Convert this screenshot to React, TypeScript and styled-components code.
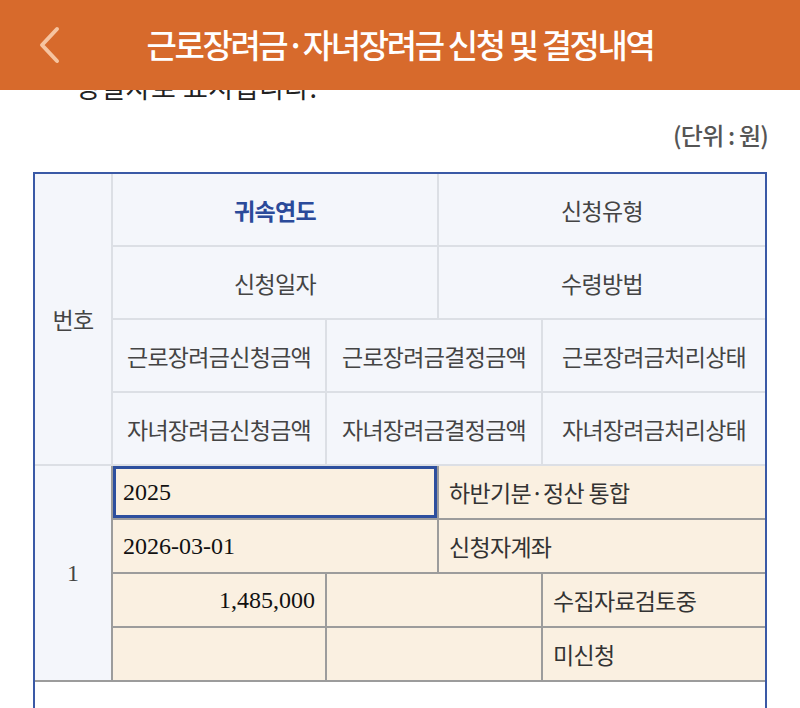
import React from 'react';
import styled, { createGlobalStyle } from 'styled-components';

const Global = createGlobalStyle`
  html, body {
    margin: 0;
    padding: 0;
    overflow: hidden;
    background: #ffffff;
    font-family: "Noto Sans CJK KR", "Noto Sans", sans-serif;
  }
`;

const TopBar = styled.header`
  position: fixed;
  top: 0;
  left: 0;
  right: 0;
  height: 90px;
  background: #d76a2c;
  display: flex;
  align-items: center;
  justify-content: center;
  z-index: 10;
`;

const BackButton = styled.button`
  position: absolute;
  left: 30px;
  top: 22px;
  width: 40px;
  height: 46px;
  border: 0;
  padding: 0;
  background: transparent;
  display: flex;
  align-items: center;
  justify-content: center;
`;

const Title = styled.h1`
  margin: 0;
  margin-top: -2px;
  color: #ffffff;
  font-size: 33px;
  font-weight: 500;
  letter-spacing: -2.4px;
  white-space: nowrap;
`;

const Page = styled.main`
  padding: 70px 33px 0 33px;
`;

const Notice = styled.p`
  margin: 0 0 0 42px;
  font-size: 27px;
  line-height: 34px;
  color: #222;
  letter-spacing: 0.5px;
  white-space: nowrap;
`;

const Unit = styled.div`
  margin-top: 15px;
  text-align: right;
  font-size: 24px;
  line-height: 32px;
  font-weight: 500;
  color: #555;
  letter-spacing: -0.8px;
  margin-right: -1px;
`;

const Table = styled.section`
  margin-top: 21px;
  border: 2px solid #3a59a6;
  border-bottom: 0;
`;

const Grid = styled.div<{ $line: string; $rowH: number }>`
  display: grid;
  grid-template-columns: 76px 212px 110px 102px 222px;
  grid-auto-rows: ${p => p.$rowH}px;
  gap: 2px;
  background: ${p => p.$line};
  padding-bottom: 2px;
`;

const Cell = styled.div<{
  $col: string;
  $row?: string;
  $bg: string;
  $align?: 'left' | 'center' | 'right';
  $serif?: boolean;
  $strong?: boolean;
  $color?: string;
  $focus?: boolean;
}>`
  grid-column: ${p => p.$col};
  grid-row: ${p => p.$row || 'auto'};
  background: ${p => p.$bg};
  display: flex;
  align-items: center;
  justify-content: ${p =>
    p.$align === 'left' ? 'flex-start' : p.$align === 'right' ? 'flex-end' : 'center'};
  padding: 0 10px;
  box-sizing: border-box;
  font-family: ${p =>
    p.$serif ? '"Liberation Serif", "Times New Roman", serif' : '"Noto Sans CJK KR", "Noto Sans", sans-serif'};
  font-size: ${p => (p.$serif ? '24px' : '23px')};
  letter-spacing: ${p => (p.$serif ? '0' : '-0.7px')};
  font-weight: ${p => (p.$strong ? 700 : 400)};
  color: ${p => p.$color || '#444'};
  white-space: nowrap;
  box-shadow: ${p => (p.$focus ? 'inset 0 0 0 3px #2d4f9e' : 'none')};
`;

const Tail = styled.div`
  height: 40px;
  background: #ffffff;
`;

const HEAD_BG = '#f4f6fb';
const BODY_BG = '#faf0e1';

function Chevron() {
  return (
    <svg width="24" height="40" viewBox="0 0 24 40" fill="none">
      <path d="M19 4 L4 20 L19 36" stroke="#f6c4a0" strokeWidth="4" strokeLinecap="round" strokeLinejoin="round" />
    </svg>
  );
}

export default function App() {
  return (
    <>
      <Global />
      <TopBar>
        <BackButton aria-label="뒤로">
          <Chevron />
        </BackButton>
        <Title>근로장려금·자녀장려금 신청 및 결정내역</Title>
      </TopBar>
      <Page>
        <Notice>정일자로 표시됩니다.</Notice>
        <Unit>(단위 : 원)</Unit>
        <Table>
          <Grid $line="#dcdfe5" $rowH={71}>
            <Cell $col="1" $row="1 / span 4" $bg={HEAD_BG}>번호</Cell>
            <Cell $col="2 / span 2" $bg={HEAD_BG} $strong $color="#2b4a9a">귀속연도</Cell>
            <Cell $col="4 / span 2" $bg={HEAD_BG}>신청유형</Cell>
            <Cell $col="2 / span 2" $bg={HEAD_BG}>신청일자</Cell>
            <Cell $col="4 / span 2" $bg={HEAD_BG}>수령방법</Cell>
            <Cell $col="2" $bg={HEAD_BG}>근로장려금신청금액</Cell>
            <Cell $col="3 / span 2" $bg={HEAD_BG}>근로장려금결정금액</Cell>
            <Cell $col="5" $bg={HEAD_BG}>근로장려금처리상태</Cell>
            <Cell $col="2" $bg={HEAD_BG}>자녀장려금신청금액</Cell>
            <Cell $col="3 / span 2" $bg={HEAD_BG}>자녀장려금결정금액</Cell>
            <Cell $col="5" $bg={HEAD_BG}>자녀장려금처리상태</Cell>
          </Grid>
          <Grid $line="#9c9c9c" $rowH={52}>
            <Cell $col="1" $row="1 / span 4" $bg={HEAD_BG} $serif>1</Cell>
            <Cell $col="2 / span 2" $bg={BODY_BG} $align="left" $serif $color="#111" $focus>2025</Cell>
            <Cell $col="4 / span 2" $bg={BODY_BG} $align="left" $color="#333">하반기분·정산 통합</Cell>
            <Cell $col="2 / span 2" $bg={BODY_BG} $align="left" $serif $color="#111">2026-03-01</Cell>
            <Cell $col="4 / span 2" $bg={BODY_BG} $align="left" $color="#333">신청자계좌</Cell>
            <Cell $col="2" $bg={BODY_BG} $align="right" $serif $color="#111">1,485,000</Cell>
            <Cell $col="3 / span 2" $bg={BODY_BG} />
            <Cell $col="5" $bg={BODY_BG} $align="left" $color="#333">수집자료검토중</Cell>
            <Cell $col="2" $bg={BODY_BG} />
            <Cell $col="3 / span 2" $bg={BODY_BG} />
            <Cell $col="5" $bg={BODY_BG} $align="left" $color="#333">미신청</Cell>
          </Grid>
          <Tail />
        </Table>
      </Page>
    </>
  );
}
